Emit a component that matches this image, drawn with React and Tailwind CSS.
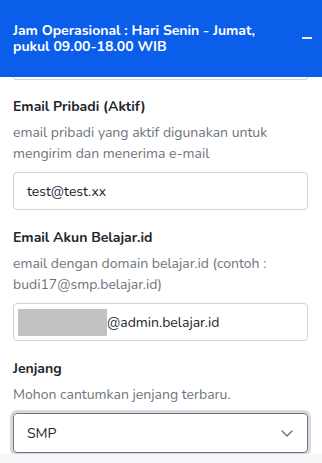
export default function App() {
  return (
    <div
      className="w-[322px] h-[463px] overflow-hidden bg-white flex flex-col"
      style={{ fontFamily: "Nunito, Lato, 'Noto Sans', sans-serif" }}
    >
      {/* Header */}
      <div className="h-[77px] shrink-0 bg-[#0b5ee9] flex items-center justify-between pl-[13px] pr-[10px]">
        <p className="text-[14px] leading-[16px] font-bold text-white">
          Jam Operasional : Hari Senin - Jumat,
          <br />
          pukul 09.00-18.00 WIB
        </p>
        <span className="block w-[10px] h-[2px] bg-[#e6edfd] mt-[-2px]" />
      </div>

      {/* Form */}
      <div className="flex-1 px-[13px] flex flex-col">
        <div className="w-[295px] h-[3px] border-x border-b border-[#ced4da] rounded-b-[4px]" />

        <div className="mt-[16px] w-[295px]">
          <label className="block text-[14px] leading-[21px] font-bold text-[#212529]">
            Email Pribadi (Aktif)
          </label>
          <p className="mt-[5px] text-[14px] leading-[21px] text-[#6c757d]">
            email pribadi yang aktif digunakan untuk mengirim dan menerima e-mail
          </p>
          <div className="mt-[8px] h-[38px] border border-[#ced4da] rounded-[4px] flex items-center px-[13px] text-[14px] text-[#212529]">
            test@test.xx
          </div>
        </div>

        <div className="mt-[17px] w-[295px]">
          <label className="block text-[14px] leading-[21px] font-bold text-[#212529]">
            Email Akun Belajar.id
          </label>
          <p className="mt-[5px] text-[14px] leading-[21px] text-[#6c757d]">
            email dengan domain belajar.id (contoh : budi17@smp.belajar.id)
          </p>
          <div className="mt-[8px] h-[38px] border border-[#ced4da] rounded-[4px] flex items-center pl-[4px] text-[14px] text-[#212529]">
            <span className="block w-[89px] h-[27px] bg-[#c2c2c2]" />
            <span>@admin.belajar.id</span>
          </div>
        </div>

        <div className="mt-[17px] w-[295px]">
          <label className="block text-[14px] leading-[21px] font-bold text-[#212529]">
            Jenjang
          </label>
          <p className="mt-[5px] text-[14px] leading-[21px] text-[#6c757d]">
            Mohon cantumkan jenjang terbaru.
          </p>
          <div className="mt-[8px] h-[40px] border border-[#6b7380] rounded-[4px] shadow-[0_0_0_3px_#d6d9de] flex items-center justify-between px-[13px] text-[14px] text-[#212529]">
            <span>SMP</span>
            <svg width="12" height="7" viewBox="0 0 12 7" fill="none" className="mr-[1px]">
              <path d="M1 1l5 5 5-5" stroke="#5f6673" strokeWidth="1.2" strokeLinecap="round" strokeLinejoin="round" />
            </svg>
          </div>
        </div>
      </div>
      <div className="h-[9px] shrink-0 bg-[#f6f7f8]" />
    </div>
  );
}
